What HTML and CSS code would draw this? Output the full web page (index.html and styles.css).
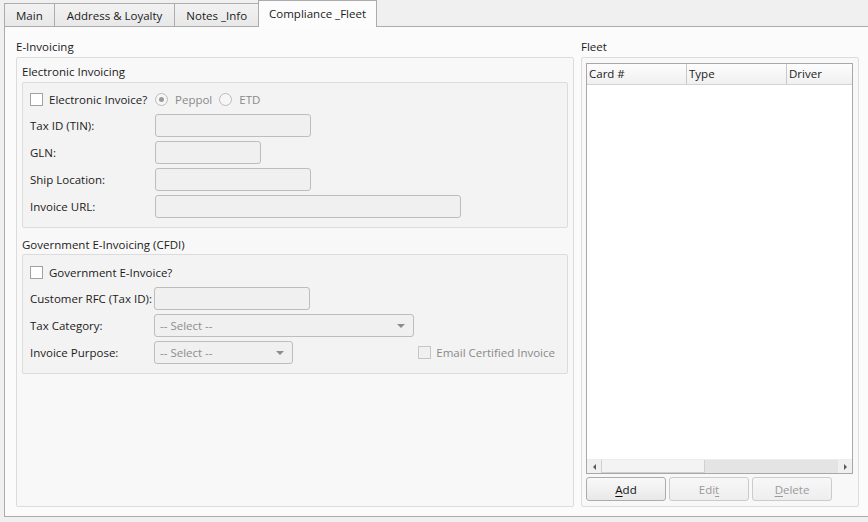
FILE: index.html
```html
<!DOCTYPE html>
<html>
<head>
<meta charset="utf-8">
<title>Compliance Fleet</title>
<link rel="stylesheet" href="styles.css">
</head>
<body>
<div class="tabs">
  <div class="tab first">Main</div>
  <div class="tab wide">Address &amp; Loyalty</div>
  <div class="tab">Notes _Info</div>
  <div class="tab active">Compliance _Fleet</div>
</div>
<div class="pane">
  <section class="col col-left">
    <div class="title">E-Invoicing</div>
    <div class="group group-ei">
      <div class="subtitle">Electronic Invoicing</div>
      <div class="box box-ei">
        <div class="row row-check">
          <label class="check lbl"><span class="cb"></span>Electronic Invoice?</label>
          <span class="radio on"></span><span class="dis rtext">Peppol</span>
          <span class="radio"></span><span class="dis rtext">ETD</span>
        </div>
        <div class="row"><span class="lbl">Tax ID (TIN):</span><span class="input w156"></span></div>
        <div class="row"><span class="lbl">GLN:</span><span class="input w106"></span></div>
        <div class="row"><span class="lbl">Ship Location:</span><span class="input w156"></span></div>
        <div class="row"><span class="lbl">Invoice URL:</span><span class="input w306"></span></div>
      </div>
      <div class="subtitle sub2">Government E-Invoicing (CFDI)</div>
      <div class="box box-gov">
        <div class="row row-check">
          <label class="check"><span class="cb"></span>Government E-Invoice?</label>
        </div>
        <div class="row"><span class="lbl lbl2">Customer RFC (Tax ID):</span><span class="input w156"></span></div>
        <div class="row"><span class="lbl lbl2">Tax Category:</span><span class="select w260"><span>-- Select --</span><span class="caret"></span></span></div>
        <div class="row row-last"><span class="lbl lbl2">Invoice Purpose:</span><span class="select w139"><span>-- Select --</span><span class="caret"></span></span>
          <label class="check dis email"><span class="cb cb-dis"></span>Email Certified Invoice</label>
        </div>
      </div>
    </div>
  </section>
  <section class="col col-right">
    <div class="title">Fleet</div>
    <div class="group fleet">
      <div class="table">
        <div class="thead">
          <div class="th">Card #</div>
          <div class="th">Type</div>
          <div class="th">Driver</div>
        </div>
        <div class="tbody"></div>
        <div class="hscroll">
          <span class="sb-btn"><span class="tri-left"></span></span>
          <span class="sb-thumb"></span>
          <span class="sb-track"></span>
          <span class="sb-btn sb-right"><span class="tri-right"></span></span>
        </div>
      </div>
      <div class="buttons">
        <div class="btn"><span><u>A</u>dd</span></div>
        <div class="btn disabled"><span>Edi<u>t</u></span></div>
        <div class="btn disabled"><span><u>D</u>elete</span></div>
      </div>
    </div>
  </section>
</div>
</body>
</html>
```
FILE: styles.css
```css
* { box-sizing: border-box; }
html, body { margin: 0; padding: 0; }
body {
  width: 868px;
  height: 522px;
  overflow: hidden;
  background: #f0f0f0;
  font-family: "Open Sans", "Noto Sans", sans-serif;
  font-size: 11.5px;
  color: #1b1b1b;
}

/* Tabs */
.tabs {
  display: flex;
  align-items: flex-end;
  height: 26px;
  padding-left: 4px;
}
.tab {
  height: 23px;
  padding: 0 11px;
  margin-left: -1px;
  border: 1px solid #acacac;
  border-bottom: none;
  background: linear-gradient(#f2f2f2, #e8e8e8);
  display: flex;
  align-items: center;
  white-space: nowrap;
}
.tab.first { margin-left: 0; }
.tab.wide { padding: 0 12px; }
.tab.active {
  height: 27px;
  margin-bottom: -1px;
  padding: 0 10px 2px 10px;
  background: #fcfcfc;
  position: relative;
  z-index: 1;
}

/* Pane */
.pane {
  height: 491px;
  margin-left: 4px;
  border: 1px solid #acacac;
  border-right: none;
  background: #fbfbfb;
  padding: 10px 0 9px 11px;
  display: flex;
  gap: 7px;
}
.col { display: flex; flex-direction: column; }
.col-left { width: 558px; }
.col-right { width: 278px; }
.title { height: 20px; line-height: 20px; }
.group {
  flex: 1;
  border: 1px solid #dcdcdc;
  border-radius: 2px;
  background: #f8f8f8;
}
.group-ei { padding: 0 5px 0 5px; }
.subtitle { padding-top: 4px; line-height: 20px; }
.subtitle.sub2 { padding-top: 7px; line-height: 19px; }

.box {
  border: 1px solid #dcdcdc;
  border-radius: 2px;
  background: #f3f3f3;
  display: flex;
  flex-direction: column;
  gap: 4px;
}
.box-ei { padding: 5px 0 9px 7px; }
.box-gov { padding: 6px 12px 9px 7px; }

.row { display: flex; align-items: center; height: 23px; }
.row-check { height: 22px; }
.lbl { width: 125px; flex: none; white-space: nowrap; }
.lbl2 { width: 124px; }

.input {
  height: 23px;
  border: 1px solid #bdbdbd;
  border-radius: 3px;
  background: #f0f0f0;
  flex: none;
}
.w106 { width: 106px; }
.w139 { width: 139px; }
.w156 { width: 156px; }
.w260 { width: 260px; }
.w306 { width: 306px; }

.select {
  height: 23px;
  border: 1px solid #bdbdbd;
  border-radius: 3px;
  background: #f0f0f0;
  color: #8e8e8e;
  display: flex;
  align-items: center;
  justify-content: space-between;
  padding: 0 8px 0 5px;
  flex: none;
}
.caret {
  width: 0;
  height: 0;
  border-left: 4px solid transparent;
  border-right: 4px solid transparent;
  border-top: 4px solid #8c8c8c;
}

.check { display: flex; align-items: center; white-space: nowrap; }
.cb {
  width: 13px;
  height: 13px;
  border: 1px solid #a2a2a2;
  background: #ffffff;
  margin-right: 6px;
  flex: none;
}
.cb-dis { border-color: #c6c6c6; background: #f0f0f0; margin-right: 5px; }
.dis { color: #8a8a8a; }
.email { margin-left: auto; }

.radio {
  width: 13px;
  height: 13px;
  border-radius: 50%;
  border: 1px solid #bcbcbc;
  background: #f6f6f6;
  flex: none;
  display: flex;
  align-items: center;
  justify-content: center;
  margin-right: 7px;
}
.radio.on::after {
  content: "";
  width: 5px;
  height: 5px;
  border-radius: 50%;
  background: #9b9b9b;
}
.rtext { margin-right: 7px; }

/* Fleet */
.fleet {
  padding: 5px 5px 5px 4px;
  display: flex;
  flex-direction: column;
}
.table {
  flex: 1;
  border: 1px solid #a8a8a8;
  background: #ffffff;
  display: flex;
  flex-direction: column;
  overflow: hidden;
}
.thead {
  flex: none;
  display: flex;
  height: 21px;
  border-bottom: 1px solid #d3d3d3;
  background: linear-gradient(#fdfdfd, #f0f0f0);
}
.th {
  width: 100px;
  flex: none;
  border-right: 1px solid #c8c8c8;
  padding-left: 2px;
  line-height: 20px;
  white-space: nowrap;
}
.tbody { flex: 1; }
.hscroll {
  flex: none;
  height: 14px;
  display: flex;
  background: #e4e4e4;
  border-top: 1px solid #ececec;
}
.sb-btn {
  width: 14px;
  flex: none;
  background: #f0f0f0;
  display: flex;
  align-items: center;
  justify-content: center;
}
.sb-thumb {
  width: 104px;
  flex: none;
  background: #f3f3f3;
  border: 1px solid #d0d0d0;
  border-top: none;
}
.sb-track { flex: 1; }
.tri-left {
  width: 0; height: 0;
  border-top: 3px solid transparent;
  border-bottom: 3px solid transparent;
  border-right: 3px solid #5a5a5a;
}
.tri-right {
  width: 0; height: 0;
  border-top: 3px solid transparent;
  border-bottom: 3px solid transparent;
  border-left: 3px solid #5a5a5a;
}

.buttons {
  flex: none;
  display: flex;
  gap: 3px;
  margin-top: 3px;
  height: 24px;
}
.btn {
  width: 80px;
  border: 1px solid #acacac;
  border-radius: 3px;
  background: linear-gradient(#f9f9f9, #e8e8e8);
  display: flex;
  align-items: center;
  justify-content: center;
  color: #111111;
}
.btn.disabled {
  color: #9a9a9a;
  border-color: #cbcbcb;
  background: linear-gradient(#f7f7f7, #eeeeee);
}
u { text-underline-offset: 2px; }
```
